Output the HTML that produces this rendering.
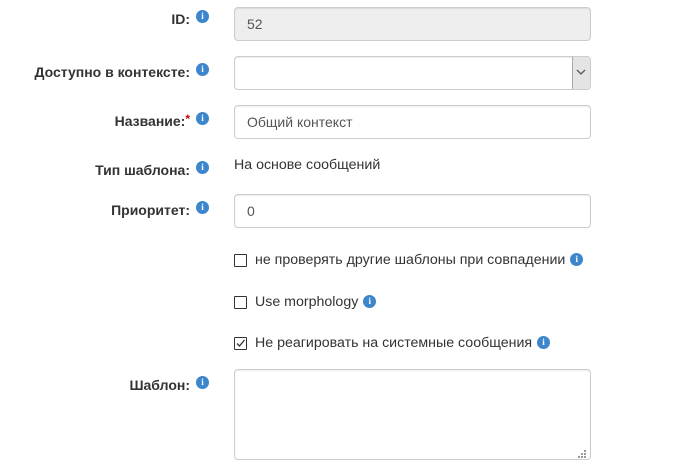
<!DOCTYPE html>
<html><head><meta charset="utf-8"><style>
*{box-sizing:border-box;margin:0;padding:0}
body{width:675px;height:472px;background:#fff;font-family:"Liberation Sans",Arial,sans-serif;color:#333;position:relative;overflow:hidden}
.lbl{position:absolute;right:485px;font-weight:bold;font-size:14px;line-height:16px;white-space:nowrap}
.req{color:#c00;font-weight:bold;position:relative;top:-3px;font-size:12px}
.i{position:absolute;width:13px;height:13px;border-radius:50%;background:#3d86cc;color:#fff;font:bold 9px/13px "Liberation Serif",serif;text-align:center}
.ii{display:inline-block;vertical-align:top;margin-left:5px;margin-top:1px;width:13px;height:13px;border-radius:50%;background:#3d86cc;color:#fff;font:bold 9px/13px "Liberation Serif",serif;text-align:center}
.in{position:absolute;left:234px;width:357px;height:34px;border:1px solid #ccc;border-radius:4px;background:#fff;font-size:14px;color:#555;padding:0 12px;line-height:32px;box-shadow:inset 0 1px 1px rgba(0,0,0,.075)}
.cb{position:absolute;left:234px;width:13px;height:13px;border:1px solid #333;border-radius:1px;background:#fff}
.ct{position:absolute;left:255px;font-size:14.2px;line-height:16px;white-space:nowrap}
</style></head><body>
<div class="lbl" style="top:11px">ID:</div><div class="i" style="left:196px;top:10px">i</div>
<div class="in" style="top:7px;background:#eee">52</div>

<div class="lbl" style="top:64px">Доступно в контексте:</div><div class="i" style="left:196px;top:63px">i</div>
<div class="in" style="top:56px"></div>
<div style="position:absolute;left:572px;top:57px;width:18px;height:32px;background:#e4e4e4;border-left:1px solid #aaa;border-radius:0 3px 3px 0"></div>
<svg style="position:absolute;left:575px;top:68px" width="12" height="8"><path d="M2 2 L6 6 L10 2" fill="none" stroke="#555" stroke-width="1.3"/></svg>

<div class="lbl" style="top:113px">Название:<span class="req">*</span></div><div class="i" style="left:196px;top:112px">i</div>
<div class="in" style="top:105px">Общий контекст</div>

<div class="lbl" style="top:162px">Тип шаблона:</div><div class="i" style="left:196px;top:161px">i</div>
<div class="ct" style="left:234px;top:157px">На основе сообщений</div>

<div class="lbl" style="top:202px">Приоритет:</div><div class="i" style="left:196px;top:201px">i</div>
<div class="in" style="top:194px">0</div>

<div class="cb" style="top:254px"></div><div class="ct" style="top:252px">не проверять другие шаблоны при совпадении<span class="ii">i</span></div>
<div class="cb" style="top:296px"></div><div class="ct" style="top:294px">Use morphology<span class="ii">i</span></div>
<div class="cb" style="top:337px"><svg width="11" height="11" style="position:absolute;left:0;top:0"><path d="M2 5.5 L4.5 8 L9.5 2" fill="none" stroke="#333" stroke-width="1.3"/></svg></div><div class="ct" style="top:335px">Не реагировать на системные сообщения<span class="ii">i</span></div>

<div class="lbl" style="top:377px">Шаблон:</div><div class="i" style="left:196px;top:376px">i</div>
<div class="in" style="top:369px;height:91px"></div>
<svg style="position:absolute;left:578px;top:448px" width="10" height="10"><g fill="#999"><rect x="6" y="2" width="2" height="2"/><rect x="3" y="5" width="2" height="2"/><rect x="6" y="5" width="2" height="2"/><rect x="0" y="8" width="2" height="2"/><rect x="3" y="8" width="2" height="2"/><rect x="6" y="8" width="2" height="2"/></g></svg>
</body></html>
